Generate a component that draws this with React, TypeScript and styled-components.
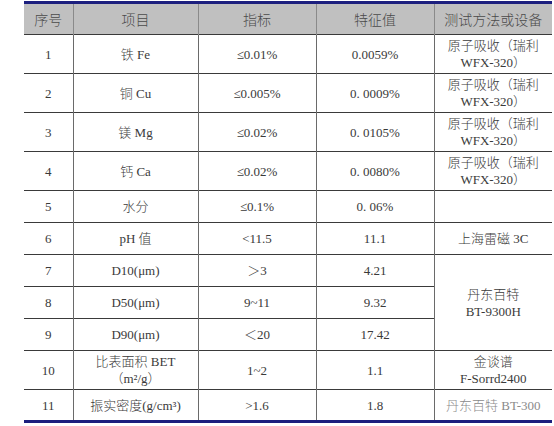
import React from "react";
import styled, { createGlobalStyle } from "styled-components";

interface SpecRow {
  no: string;
  item: React.ReactNode;
  limit: string;
  value: string;
  method?: React.ReactNode;
  methodSpan?: number;
  skipMethod?: boolean;
  tall?: boolean;
  faded?: boolean;
}

const rows: SpecRow[] = [
  { no: "1", item: "铁 Fe", limit: "≤0.01%", value: "0.0059%", method: <>原子吸收（瑞利<br />WFX-320）</>, tall: true },
  { no: "2", item: "铜 Cu", limit: "≤0.005%", value: "0. 0009%", method: <>原子吸收（瑞利<br />WFX-320）</>, tall: true },
  { no: "3", item: "镁 Mg", limit: "≤0.02%", value: "0. 0105%", method: <>原子吸收（瑞利<br />WFX-320）</>, tall: true },
  { no: "4", item: "钙 Ca", limit: "≤0.02%", value: "0. 0080%", method: <>原子吸收（瑞利<br />WFX-320）</>, tall: true },
  { no: "5", item: "水分", limit: "≤0.1%", value: "0. 06%", method: "" },
  { no: "6", item: "pH 值", limit: "<11.5", value: "11.1", method: "上海雷磁 3C" },
  { no: "7", item: "D10(μm)", limit: "＞3", value: "4.21", method: <>丹东百特<br />BT-9300H</>, methodSpan: 3 },
  { no: "8", item: "D50(μm)", limit: "9~11", value: "9.32", skipMethod: true },
  { no: "9", item: "D90(μm)", limit: "＜20", value: "17.42", skipMethod: true },
  { no: "10", item: <>比表面积 BET<br />（m²/g）</>, limit: "1~2", value: "1.1", method: <>金谈谱<br />F-Sorrd2400</>, tall: true },
  { no: "11", item: "振实密度(g/cm³)", limit: ">1.6", value: "1.8", method: "丹东百特 BT-300", faded: true },
];

const App: React.FC = () => {
  return (
    <>
      <GlobalStyle />
      <Page>
        <Table>
          <colgroup>
            <col style={{ width: 49 }} />
            <col style={{ width: 125 }} />
            <col style={{ width: 118 }} />
            <col style={{ width: 118 }} />
            <col style={{ width: 118 }} />
          </colgroup>
          <thead>
            <HeadRow>
              <HeadCell>序号</HeadCell>
              <HeadCell>项目</HeadCell>
              <HeadCell>指标</HeadCell>
              <HeadCell>特征值</HeadCell>
              <HeadCell>测试方法或设备</HeadCell>
            </HeadRow>
          </thead>
          <tbody>
            {rows.map((row) => (
              <BodyRow key={row.no} $tall={row.tall}>
                <Cell>{row.no}</Cell>
                <Cell>{row.item}</Cell>
                <Cell>{row.limit}</Cell>
                <Cell>{row.value}</Cell>
                {!row.skipMethod && (
                  <Cell rowSpan={row.methodSpan} $faded={row.faded}>
                    {row.method}
                  </Cell>
                )}
              </BodyRow>
            ))}
          </tbody>
        </Table>
      </Page>
    </>
  );
};

const GlobalStyle = createGlobalStyle`
  html, body {
    margin: 0;
    padding: 0;
    background: #ffffff;
  }
  body {
    font-family: "Liberation Serif", "Noto Sans CJK SC", serif;
    font-weight: 300;
  }
`;

const Page = styled.div`
  width: 554px;
  height: 426px;
  padding: 1px 0 0 24px;
  box-sizing: border-box;
  overflow: hidden;
`;

const Table = styled.table`
  width: 528px;
  border-collapse: collapse;
  table-layout: fixed;
  border-top: 3px solid #1c1f7e;
  border-bottom: 3px solid #1c1f7e;
`;

const HeadRow = styled.tr`
  height: 32px;
  background: #c0c0c0;
`;

const HeadCell = styled.th`
  padding: 0;
  font-size: 14px;
  font-weight: 300;
  color: #4a4a4a;
  text-align: center;
  vertical-align: middle;
  border-left: 1px solid #8a8a8a;

  &:first-child {
    border-left: none;
  }
`;

const BodyRow = styled.tr<{ $tall?: boolean }>`
  height: ${({ $tall }) => ($tall ? "39px" : "32px")};
`;

const Cell = styled.td<{ $faded?: boolean }>`
  padding: 0;
  font-size: 13px;
  line-height: 17px;
  font-weight: 300;
  color: ${({ $faded }) => ($faded ? "#8a8a8a" : "#3a3a3a")};
  text-align: center;
  vertical-align: middle;
  border-top: 1px solid #3a3a3a;
  border-left: 1px solid #6a6a6a;

  &:first-child {
    border-left: none;
  }
`;

export default App;
